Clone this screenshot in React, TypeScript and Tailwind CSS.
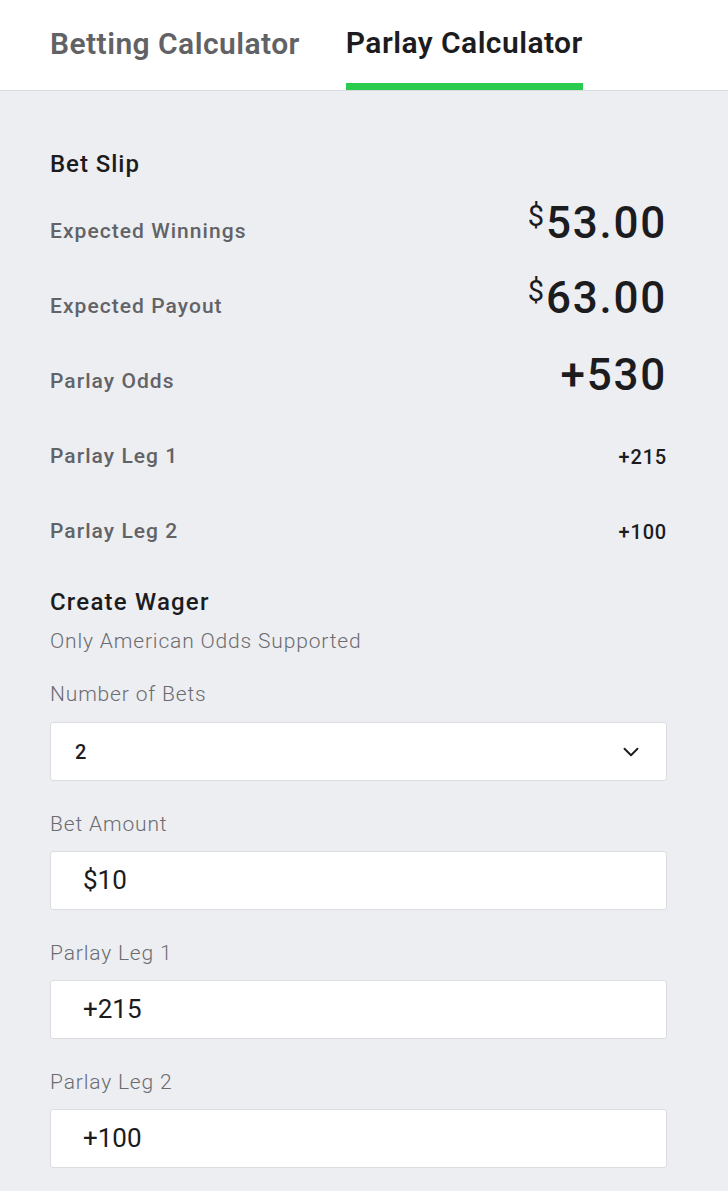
import { ChevronDown } from 'lucide-react';

const slipRows = [
  { label: 'Expected Winnings', value: '53.00', money: true },
  { label: 'Expected Payout', value: '63.00', money: true },
  { label: 'Parlay Odds', value: '+530', big: true },
  { label: 'Parlay Leg 1', value: '+215' },
  { label: 'Parlay Leg 2', value: '+100' },
];

const Field = ({ label, value }: { label: string; value: string }) => (
  <div className="mt-[31px]">
    <div className="h-6 leading-6 text-[21px] tracking-[0.04em] font-light text-[#6b6c70]">{label}</div>
    <div className="mt-[15px] h-[59px] flex items-center bg-white border border-[#dcdde0] rounded-[3px] px-8">
      <span className="text-[26px] text-[#1b1b1d]">{value}</span>
    </div>
  </div>
);

const App = () => {
  return (
    <div className="min-h-screen bg-[#edeef2] font-['Roboto',sans-serif]">
      <div className="h-[91px] bg-white border-b border-[#d9dadd] flex items-end px-[50px] gap-[46px]">
        <button className="h-full flex items-center pb-[3px] text-[30px] tracking-[0.015em] font-semibold text-[#616265]">
          Betting Calculator
        </button>
        <button className="h-full flex flex-col">
          <span className="flex-1 flex items-center pt-[2px] text-[30px] tracking-[0.015em] font-semibold text-[#1c1c1e]">
            Parlay Calculator
          </span>
          <span className="h-[7px] bg-[#29cc4e]" />
        </button>
      </div>

      <div className="pl-[50px] pr-[61px] pt-[59px] pb-6">
        <h2 className="h-7 leading-7 text-[24px] tracking-[0.04em] font-medium text-[#1c1c1e]">Bet Slip</h2>
        <div className="mt-4">
          {slipRows.map((row) => (
            <div key={row.label} className="h-[75px] flex items-center justify-between">
              <span className="text-[21px] tracking-[0.05em] font-medium text-[#626367]">{row.label}</span>
              {row.money ? (
                <span className="flex items-start text-[#1c1c1e] -mt-[18px]">
                  <span className="text-[29px] leading-none mt-[1px] mr-[2px]">$</span>
                  <span className="text-[44px] leading-none tracking-[0.04em] font-medium">{row.value}</span>
                </span>
              ) : row.big ? (
                <span className="text-[44px] leading-none tracking-[0.04em] font-medium text-[#1c1c1e] -mt-[14px]">
                  {row.value}
                </span>
              ) : (
                <span className="text-[20px] tracking-[0.04em] font-medium text-[#1c1c1e]">{row.value}</span>
              )}
            </div>
          ))}
        </div>

        <h2 className="mt-[19px] h-7 leading-7 text-[24px] tracking-[0.05em] font-medium text-[#1c1c1e]">
          Create Wager
        </h2>
        <p className="mt-[13px] h-6 leading-6 text-[21px] tracking-[0.04em] font-light text-[#6b6c70]">
          Only American Odds Supported
        </p>
        <div className="mt-[29px] h-6 leading-6 text-[21px] tracking-[0.04em] font-light text-[#6b6c70]">
          Number of Bets
        </div>
        <div className="mt-4 h-[59px] flex items-center justify-between bg-white border border-[#dcdde0] rounded-[3px] pl-6 pr-[22px]">
          <span className="text-[20px] font-medium text-[#1c1c1e]">2</span>
          <ChevronDown size={26} strokeWidth={1.75} className="text-[#1c1c1e]" />
        </div>

        <Field label="Bet Amount" value="$10" />
        <Field label="Parlay Leg 1" value="+215" />
        <Field label="Parlay Leg 2" value="+100" />
      </div>
    </div>
  );
};

export default App;
